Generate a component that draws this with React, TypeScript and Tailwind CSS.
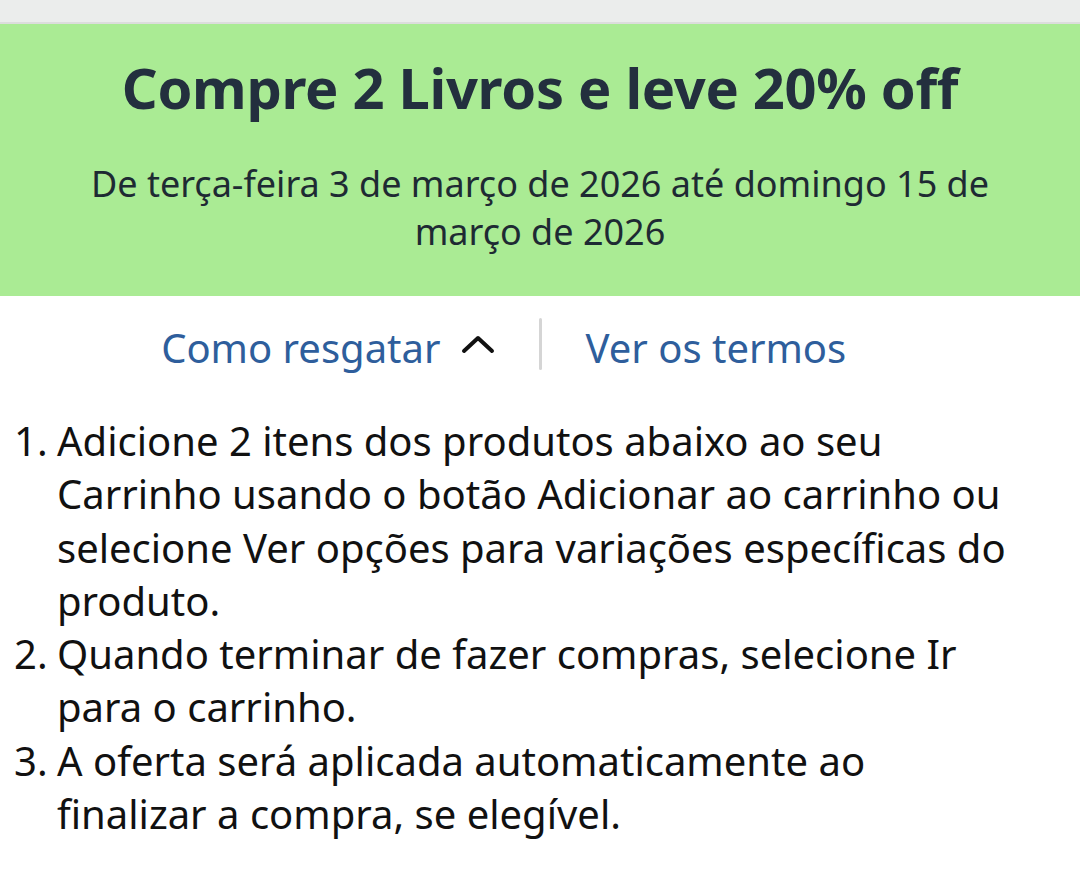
import React from 'react';

const steps: string[][] = [
    [
        'Adicione 2 itens dos produtos abaixo ao seu',
        'Carrinho usando o botão Adicionar ao carrinho ou',
        'selecione Ver opções para variações específicas do',
        'produto.',
    ],
    ['Quando terminar de fazer compras, selecione Ir', 'para o carrinho.'],
    ['A oferta será aplicada automaticamente ao', 'finalizar a compra, se elegível.'],
];

const ChevronUp = () => (
    <svg width="34" height="20" viewBox="0 0 34 20" fill="none" className="ml-[20px] mt-[-8px]">
        <path d="M3 17 L17 4 L31 17" stroke="#111" strokeWidth="4" strokeLinecap="round" strokeLinejoin="round" />
    </svg>
);

export default function App() {
    return (
        <div className="w-[1080px] h-[874px] bg-white overflow-hidden" style={{ fontFamily: '"Noto Sans", "Open Sans", sans-serif' }}>
            {/* Top strip */}
            <div className="h-[22px] bg-[#ebedec]" />
            <div className="h-[2px] bg-[#dcdddc]" />

            {/* Promo banner */}
            <div className="bg-[#aaeb94] h-[272px] pt-[31px] flex flex-col items-center text-center">
                <h1 className="text-[56px] leading-[64px] font-bold text-[#232f3e] tracking-[-0.3px]">
                    Compre 2 Livros e leve 20% off
                </h1>
                <p className="mt-[41px] text-[36px] leading-[48px] text-[#1e2a33] px-[60px] whitespace-nowrap">
                    De terça-feira 3 de março de 2026 até domingo 15 de
                    <br />
                    março de 2026
                </p>
            </div>

            {/* Links */}
            <div className="mt-[22px] h-[52px] flex items-stretch">
                <div className="flex-1 flex items-center justify-end pr-[44px] pt-[8px]">
                    <span className="text-[40px] text-[#2e5e9c] leading-none">Como resgatar</span>
                    <ChevronUp />
                </div>
                <div className="w-[3px] rounded-full bg-[#d5d5d5]" />
                <div className="flex-1 flex items-center justify-start pl-[44px] pt-[8px]">
                    <span className="text-[40px] text-[#2e5e9c] leading-none">Ver os termos</span>
                </div>
            </div>

            {/* Steps */}
            <ol className="mt-[44px] pl-[14px] text-[40px] leading-[53.3px] text-[#111111]">
                {steps.map((lines, i) => (
                    <li key={i} className="flex">
                        <span className="w-[43px] shrink-0">{i + 1}.</span>
                        <span className="whitespace-nowrap">
                            {lines.map((line, j) => (
                                <React.Fragment key={j}>
                                    {line}
                                    {j < lines.length - 1 && <br />}
                                </React.Fragment>
                            ))}
                        </span>
                    </li>
                ))}
            </ol>
        </div>
    );
}
